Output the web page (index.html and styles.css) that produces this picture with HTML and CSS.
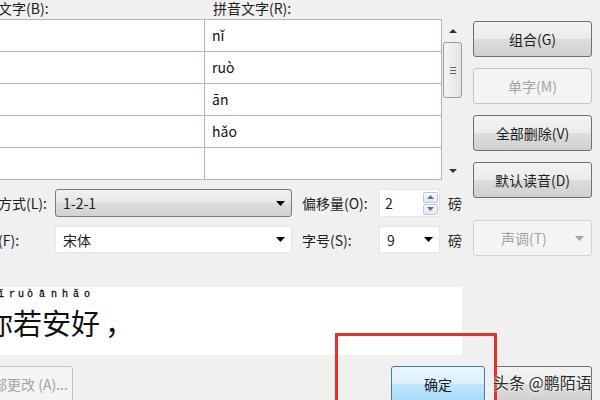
FILE: index.html
```html
<!DOCTYPE html>
<html lang="zh-CN">
<head>
    <meta charset="UTF-8">
    <title>拼音指南</title>
    <link rel="stylesheet" href="styles.css">
</head>
<body>
    <div class="dialog">
        <div class="upper">
            <div class="left">
                <div class="list-labels">
                    <span class="lbl-base">基准文字(B):</span>
                    <span>拼音文字(R):</span>
                </div>
                <div class="list">
                    <table class="pairs">
                        <colgroup><col class="c1"><col class="c2"></colgroup>
                        <tr><td></td><td>nǐ</td></tr>
                        <tr><td></td><td>ruò</td></tr>
                        <tr><td></td><td>ān</td></tr>
                        <tr><td></td><td>hǎo</td></tr>
                        <tr><td></td><td></td></tr>
                    </table>
                    <div class="scroll">
                        <span class="arr up"></span>
                        <span class="thumb"><i></i></span>
                        <span class="arr down"></span>
                    </div>
                </div>

                <div class="fields">
                    <label>对齐方式(L):</label>
                    <div class="combo gray">
                        <span>1-2-1</span>
                        <svg width="9" height="5" viewBox="0 0 9 5"><path d="M0 0h9L4.5 5z"/></svg>
                    </div>
                    <label class="lbl2">偏移量(O):</label>
                    <div class="spin">
                        <span>2</span>
                        <span class="spin-btns">
                            <b><svg width="7" height="4" viewBox="0 0 7 4"><path d="M0 4h7L3.5 0z"/></svg></b>
                            <b><svg width="7" height="4" viewBox="0 0 7 4"><path d="M0 0h7L3.5 4z"/></svg></b>
                        </span>
                    </div>
                    <span class="unit">磅</span>

                    <label>字体(F):</label>
                    <div class="combo">
                        <span>宋体</span>
                        <svg width="9" height="5" viewBox="0 0 9 5"><path d="M0 0h9L4.5 5z"/></svg>
                    </div>
                    <label class="lbl2">字号(S):</label>
                    <div class="combo">
                        <span>9</span>
                        <svg width="9" height="5" viewBox="0 0 9 5"><path d="M0 0h9L4.5 5z"/></svg>
                    </div>
                    <span class="unit">磅</span>
                </div>

                <div class="preview">
                    <div class="ruby">
                        <span class="r1">ǐ</span><span class="r2">ruò</span><span class="r3">ā</span><span class="r4">n</span><span class="r5">hǎo</span>
                    </div>
                    <div class="base">你若安好<span class="comma">，</span></div>
                </div>
            </div>

            <div class="side">
                <button class="btn">组合(G)</button>
                <button class="btn" disabled>单字(M)</button>
                <button class="btn">全部删除(V)</button>
                <button class="btn">默认读音(D)</button>
                <div class="combo tone">
                    <span>声调(T)</span>
                    <svg width="9" height="5" viewBox="0 0 9 5"><path d="M0 0h9L4.5 5z"/></svg>
                </div>
            </div>
        </div>

        <div class="lower">
            <button class="btn all" disabled>全部更改 (A)...</button>
            <button class="btn ok">确定</button>
            <!-- label hidden under the watermark in the screenshot -->
            <button class="btn cancel" aria-label="取消"></button>
        </div>
    </div>

    <!-- annotation + watermark on top of the screenshot -->
    <div class="mark"></div>
    <div class="watermark">头条 @鹏陌语</div>
</body>
</html>
```

FILE: styles.css
```css
body {
    margin: 0;
    width: 600px;
    height: 400px;
    overflow: hidden;
    position: relative;
    background-color: #f0f0f0;
    font-family: "Noto Sans CJK SC", "Noto Sans", sans-serif;
    font-size: 14px;
    color: #1e1e1e;
}
.dialog {
    margin-left: -30px;
    width: 622px;
}
.upper {
    display: flex;
    gap: 10px;
}
.left {
    width: 493px;
}
.list-labels {
    height: 19px;
    display: flex;
    line-height: 16px;
}
.lbl-base {
    width: 243px;
}
.list {
    display: flex;
    height: 161px;
}
.pairs {
    width: 472px;
    border-collapse: collapse;
    table-layout: fixed;
    background-color: #fff;
    line-height: 16px;
}
.pairs .c1 {
    width: 234px;
}
.pairs tr {
    height: 32px;
}
.pairs td {
    border: 1px solid #a7b7cd;
    padding: 0 0 2px 7px;
    color: #111;
}
.scroll {
    width: 21px;
    display: flex;
    flex-direction: column;
    align-items: center;
    padding: 10px 0 7px;
    box-sizing: border-box;
}
.arr {
    width: 0;
    height: 0;
    border-left: 4px solid transparent;
    border-right: 4px solid transparent;
}
.arr.up {
    border-bottom: 4px solid #333;
}
.arr.down {
    margin-top: auto;
    border-top: 4px solid #333;
}
.thumb {
    margin-top: 9px;
    width: 19px;
    height: 56px;
    box-sizing: border-box;
    border: 1px solid #9b9b9b;
    border-radius: 3px;
    background: linear-gradient(to right, #f5f5f5, #e4e4e4);
    display: flex;
    align-items: center;
    justify-content: center;
}
.thumb i {
    width: 6px;
    height: 7px;
    background: repeating-linear-gradient(#666 0 1px, transparent 1px 3px);
}
.fields {
    margin-top: 9px;
    display: grid;
    grid-template-columns: 85px 237px 87px 61px 1fr;
    grid-template-rows: 28px 27px;
    row-gap: 9px;
    align-items: center;
}
.lbl2 {
    padding-left: 10px;
}
.unit {
    padding-left: 8px;
}
.combo {
    height: 100%;
    box-sizing: border-box;
    display: flex;
    align-items: center;
    justify-content: space-between;
    padding: 0 6px 0 7px;
    background-color: #fff;
    border: 1px solid #e6e6e6;
}
.combo.gray {
    border: 1px solid #7a7a7a;
    border-radius: 3px;
    background: linear-gradient(#f1f1f1, #e6e6e6 50%, #dcdcdc 51%, #d2d2d2);
}
.spin {
    height: 100%;
    box-sizing: border-box;
    display: flex;
    align-items: center;
    justify-content: space-between;
    padding: 0 1px 0 5px;
    background-color: #fff;
    border: 1px solid #e6e6e6;
}
.spin-btns {
    display: flex;
    flex-direction: column;
    gap: 1px;
}
.spin-btns b {
    width: 15px;
    height: 11px;
    box-sizing: border-box;
    border: 1px solid #c2cad8;
    border-radius: 2px;
    background: linear-gradient(#f7f9fc, #e3e8f1);
    display: flex;
    align-items: center;
    justify-content: center;
    fill: #5d6f98;
}
.preview {
    margin-top: 34px;
    width: 492px;
    height: 68px;
    background-color: #fff;
    padding-left: 20px;
    box-sizing: border-box;
    overflow: hidden;
}
.ruby {
    display: flex;
    padding-top: 2px;
    height: 12px;
    font-family: "Liberation Mono", monospace;
    font-size: 10px;
    line-height: 12px;
    letter-spacing: 3px;
    color: #111;
    -webkit-text-stroke: 0.3px #111;
}
.r1 { margin-left: 8px; }
.r2 { margin-left: 2px; }
.r3 { margin-left: 3px; }
.r4 { margin-left: 3px; }
.r5 { margin-left: 2px; letter-spacing: 5px; }
.base {
    margin-left: -6px;
    font-size: 29px;
    line-height: 42px;
    color: #111;
}
.comma {
    margin-left: 5px;
}
.side {
    width: 119px;
    padding-top: 21px;
    display: flex;
    flex-direction: column;
    gap: 11px;
}
.btn {
    height: 36px;
    border: 1px solid #707070;
    border-radius: 3px;
    background: linear-gradient(#f3f3f3, #ebebeb 50%, #dddddd 51%, #d0d0d0);
    font-family: inherit;
    font-size: 14px;
    color: #1e1e1e;
    padding: 0;
}
.btn:disabled {
    border-color: #c4c4c4;
    background: #f4f4f4;
    color: #a3a3a3;
}
.combo.tone {
    margin-top: 11px;
    height: 36px;
    flex: none;
    padding: 0 7px 0 27px;
    border: 1px solid #d2d2d2;
    border-radius: 3px;
    background-color: #f4f4f4;
    color: #a3a3a3;
    fill: #a3a3a3;
    white-space: nowrap;
}
.lower {
    margin-top: 11px;
    display: flex;
    gap: 10px;
}
.btn.all {
    margin-left: 4px;
    width: 99px;
}
.btn.ok {
    margin-left: auto;
    width: 94px;
    border-color: #3c7fb1;
    background: linear-gradient(#eaf6fd, #d9f0fc 50%, #bee6fd 51%, #a7d9f5);
}
.btn.cancel {
    width: 97px;
}
.mark {
    position: absolute;
    left: 335px;
    top: 333px;
    width: 162px;
    height: 90px;
    box-sizing: border-box;
    border: 3px solid #e8312d;
}
.watermark {
    position: absolute;
    left: 493px;
    top: 370px;
    font-size: 16px;
    color: #2a2a2a;
    text-shadow: 0 0 2px #fff, 0 0 2px #fff;
}
```
